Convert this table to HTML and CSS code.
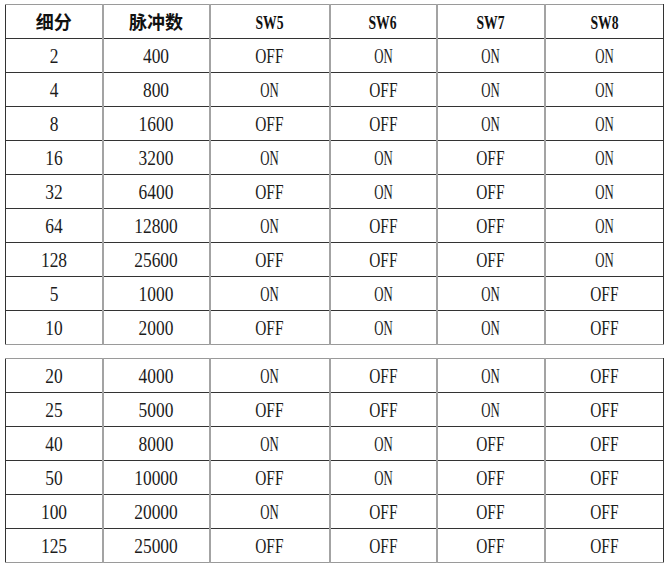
FILE: index.html
```html
<!DOCTYPE html>
<html lang="zh">
<head>
<meta charset="utf-8">
<title>细分设置表</title>
<link rel="stylesheet" href="styles.css">
</head>
<body>
<div class="sheet">
<table class="grid">
<colgroup><col class="c1"><col class="c2"><col class="c3"><col class="c4"><col class="c5"><col class="c6"></colgroup>
<tr class="head"><td><span class="cjk">细分</span></td><td><span class="cjk">脉冲数</span></td><td><span class="sw">SW5</span></td><td><span class="sw">SW6</span></td><td><span class="sw">SW7</span></td><td><span class="sw">SW8</span></td></tr>
<tr><td><span class="n">2</span></td><td><span class="n">400</span></td><td><span class="off">OFF</span></td><td><span class="on">ON</span></td><td><span class="on">ON</span></td><td><span class="on">ON</span></td></tr>
<tr><td><span class="n">4</span></td><td><span class="n">800</span></td><td><span class="on">ON</span></td><td><span class="off">OFF</span></td><td><span class="on">ON</span></td><td><span class="on">ON</span></td></tr>
<tr><td><span class="n">8</span></td><td><span class="n">1600</span></td><td><span class="off">OFF</span></td><td><span class="off">OFF</span></td><td><span class="on">ON</span></td><td><span class="on">ON</span></td></tr>
<tr><td><span class="n">16</span></td><td><span class="n">3200</span></td><td><span class="on">ON</span></td><td><span class="on">ON</span></td><td><span class="off">OFF</span></td><td><span class="on">ON</span></td></tr>
<tr><td><span class="n">32</span></td><td><span class="n">6400</span></td><td><span class="off">OFF</span></td><td><span class="on">ON</span></td><td><span class="off">OFF</span></td><td><span class="on">ON</span></td></tr>
<tr><td><span class="n">64</span></td><td><span class="n">12800</span></td><td><span class="on">ON</span></td><td><span class="off">OFF</span></td><td><span class="off">OFF</span></td><td><span class="on">ON</span></td></tr>
<tr><td><span class="n">128</span></td><td><span class="n">25600</span></td><td><span class="off">OFF</span></td><td><span class="off">OFF</span></td><td><span class="off">OFF</span></td><td><span class="on">ON</span></td></tr>
<tr><td><span class="n">5</span></td><td><span class="n">1000</span></td><td><span class="on">ON</span></td><td><span class="on">ON</span></td><td><span class="on">ON</span></td><td><span class="off">OFF</span></td></tr>
<tr><td><span class="n">10</span></td><td><span class="n">2000</span></td><td><span class="off">OFF</span></td><td><span class="on">ON</span></td><td><span class="on">ON</span></td><td><span class="off">OFF</span></td></tr>
</table>
<table class="grid">
<colgroup><col class="c1"><col class="c2"><col class="c3"><col class="c4"><col class="c5"><col class="c6"></colgroup>
<tr><td><span class="n">20</span></td><td><span class="n">4000</span></td><td><span class="on">ON</span></td><td><span class="off">OFF</span></td><td><span class="on">ON</span></td><td><span class="off">OFF</span></td></tr>
<tr><td><span class="n">25</span></td><td><span class="n">5000</span></td><td><span class="off">OFF</span></td><td><span class="off">OFF</span></td><td><span class="on">ON</span></td><td><span class="off">OFF</span></td></tr>
<tr><td><span class="n">40</span></td><td><span class="n">8000</span></td><td><span class="on">ON</span></td><td><span class="on">ON</span></td><td><span class="off">OFF</span></td><td><span class="off">OFF</span></td></tr>
<tr><td><span class="n">50</span></td><td><span class="n">10000</span></td><td><span class="off">OFF</span></td><td><span class="on">ON</span></td><td><span class="off">OFF</span></td><td><span class="off">OFF</span></td></tr>
<tr><td><span class="n">100</span></td><td><span class="n">20000</span></td><td><span class="on">ON</span></td><td><span class="off">OFF</span></td><td><span class="off">OFF</span></td><td><span class="off">OFF</span></td></tr>
<tr><td><span class="n">125</span></td><td><span class="n">25000</span></td><td><span class="off">OFF</span></td><td><span class="off">OFF</span></td><td><span class="off">OFF</span></td><td><span class="off">OFF</span></td></tr>
</table>
</div>
</body>
</html>
```
FILE: styles.css
```css
html, body {
  margin: 0;
  padding: 0;
  background: #ffffff;
}

.sheet {
  padding: 4px 0 0 5px;
}

.grid {
  border-collapse: collapse;
  table-layout: fixed;
  width: 658px;
  margin-bottom: 13px;
  font-family: "Liberation Serif", "Noto Sans CJK SC", serif;
  font-size: 20px;
  color: #1c1c1c;
}

.c1 { width: 97px; }
.c2 { width: 107px; }
.c3 { width: 120px; }
.c4 { width: 107px; }
.c5 { width: 108px; }
.c6 { width: 119px; }

.grid tr {
  height: 34px;
}

.grid td {
  padding: 0;
  text-align: center;
  vertical-align: middle;
  line-height: 20px;
  border-top: 1px solid #333333;
  border-bottom: 1px solid #333333;
  border-left: 2px solid #a3a3a3;
  border-right: 2px solid #a3a3a3;
}

.grid td:first-child {
  border-left: 1px solid #333333;
}

.grid td:last-child {
  border-right: 1px solid #333333;
}

.grid tr:first-child td {
  border-top: 1px solid #9a9a9a;
}

.grid tr:last-child td {
  border-bottom: 1px solid #9a9a9a;
}

.n, .on, .off, .sw {
  display: inline-block;
}

.n {
  transform: scaleX(0.87);
}

.on {
  transform: scaleX(0.64);
}

.off {
  transform: scaleX(0.77);
}

.cjk {
  font-family: "Noto Sans CJK SC", sans-serif;
  font-weight: 700;
  font-size: 18px;
  color: #111111;
}

.sw {
  font-family: "Liberation Serif", serif;
  font-weight: 700;
  font-size: 19px;
  padding-top: 2px;
  transform: scaleX(0.72);
  color: #111111;
}
```
